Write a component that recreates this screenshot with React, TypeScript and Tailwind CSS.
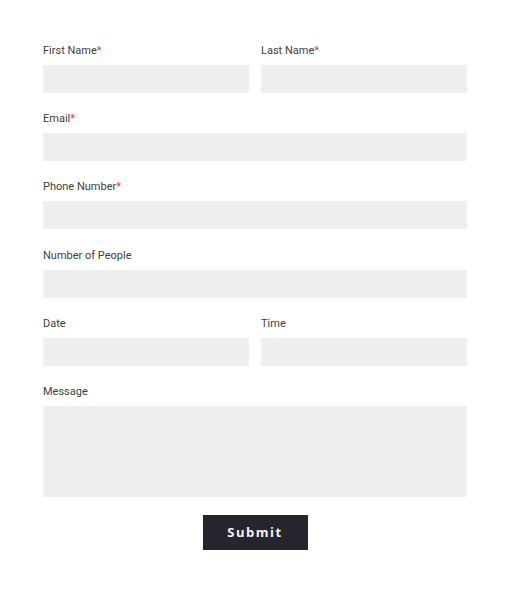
export default function App() {
  const label = "block text-[11px] leading-4 text-[#3d3d3d] mb-[6px]";
  const input = "block w-full h-[28px] bg-[#efefef] outline-none";
  const req = <span className="text-[#e53935]">*</span>;
  return (
    <div className="min-h-screen bg-white" style={{ fontFamily: "Roboto, 'Liberation Sans', sans-serif" }}>
      <form className="ml-[43px] w-[424px] pt-[43px]">
        <div className="grid grid-cols-2 gap-x-3">
          <div className="mb-[18.2px]">
            <label className={label}>First Name{req}</label>
            <input className={input} />
          </div>
          <div className="mb-[18.2px]">
            <label className={label}>Last Name{req}</label>
            <input className={input} />
          </div>
        </div>
        <div className="mb-[18.2px]">
          <label className={label}>Email{req}</label>
          <input className={input} />
        </div>
        <div className="mb-[18.2px]">
          <label className={label}>Phone Number{req}</label>
          <input className={input} />
        </div>
        <div className="mb-[18.2px]">
          <label className={label}>Number of People</label>
          <input className={input} />
        </div>
        <div className="grid grid-cols-2 gap-x-3">
          <div className="mb-[18.2px]">
            <label className={label}>Date</label>
            <input className={input} />
          </div>
          <div className="mb-[18.2px]">
            <label className={label}>Time</label>
            <input className={input} />
          </div>
        </div>
        <div>
          <label className={label}>Message</label>
          <textarea className="block w-full h-[91px] bg-[#efefef] outline-none resize-none" />
        </div>
        <div className="flex justify-center mt-[18px]">
          <button
            type="button"
            className="w-[105px] h-[35px] bg-[#25252d] text-[#f4f4f4] text-[13px] font-bold tracking-[0.12em]"
            style={{ fontFamily: "'Open Sans', sans-serif" }}
          >
            Submit
          </button>
        </div>
      </form>
    </div>
  );
}
